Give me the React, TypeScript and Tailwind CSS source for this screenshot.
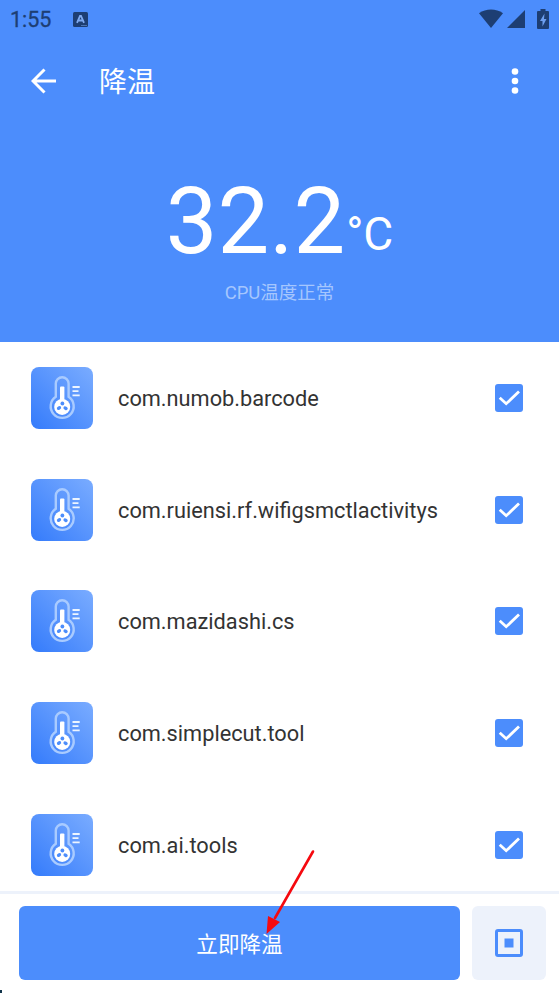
import React from 'react';

const packages = [
  'com.numob.barcode',
  'com.ruiensi.rf.wifigsmctlactivitys',
  'com.mazidashi.cs',
  'com.simplecut.tool',
  'com.ai.tools',
];

const ThermometerIcon = () => (
  <svg className="w-[62px] h-[62px]" viewBox="0 0 62 62" fill="none">
    <defs>
      <linearGradient id="tile" x1="0" y1="1" x2="1" y2="0">
        <stop offset="0" stopColor="#347bfb" />
        <stop offset="1" stopColor="#7aacff" />
      </linearGradient>
    </defs>
    <rect width="62" height="62" rx="8" fill="url(#tile)" />
    <path d="M24.8 29.8V16.6a6.4 6.4 0 0 1 12.8 0v13.2a11.5 11.5 0 1 1-12.8 0z" stroke="#a9cbff" strokeWidth="2.4" />
    <path d="M29 20.5a1 1 0 0 1 1-1h2.400a1 1 0 0 1 1 1V36H29z" fill="#fff" />
    <circle cx="31.2" cy="39.9" r="8" fill="#fff" />
    <g fill="#4c8dfb">
      <ellipse cx="31.4" cy="36.6" rx="1.9" ry="2" />
      <ellipse cx="28" cy="41" rx="2.3" ry="1.700" transform="rotate(-30 28 41)" />
      <ellipse cx="34.6" cy="41.2" rx="2.3" ry="1.700" transform="rotate(30 34.6 41.2)" />
    </g>
    <path d="M41.5 20h7.2M41.5 24.2h6M41.5 28.4h7.2" stroke="#edf5ff" strokeWidth="1.8" />
  </svg>
);

const Checkbox = () => (
  <svg className="w-7 h-7" viewBox="0 0 28 28" fill="none">
    <rect width="28" height="28" rx="3" fill="#4c8dfc" />
    <path d="M4.7 13.7l6.5 6L24 7.5" stroke="#fff" strokeWidth="2.8" />
  </svg>
);

const StatusBar = () => (
  <div className="flex h-[38px] items-center pl-[10px] pr-[10px] text-[#1d3e73]">
    <span className="mt-[2px] w-[63px] text-[21.5px] leading-none">
      <span className="[-webkit-text-stroke:0.3px_#1d3e73]">1:55</span>
    </span>
    <svg className="h-[15px] w-[15px]" viewBox="0 0 15 15">
      <rect width="15" height="15" rx="1.5" fill="currentColor" />
      <path d="M4 10.800L7 3.8h1l3 7M5.3 8.5h4.4" stroke="#7faaf0" strokeWidth="1.8" fill="none" />
      <path d="M8.5 13.5h5" stroke="#7faaf0" strokeWidth="1" strokeDasharray="1 1" />
    </svg>
    <svg className="ml-auto h-[20px] w-[24px]" viewBox="0 0 24 20" fill="currentColor">
      <path d="M0 4.2C7-.7 17-.7 24 4.2L12 19z" />
    </svg>
    <svg className="ml-[4px] h-[18px] w-[18px]" viewBox="0 0 18 18" fill="currentColor">
      <path d="M18 0v18H0z" />
    </svg>
    <svg className="ml-[12px] h-[20px] w-[12px]" viewBox="0 0 12 20" fill="currentColor">
      <path d="M3.5 0h5v2H11a1 1 0 0 1 1 1v16a1 1 0 0 1-1 1H1a1 1 0 0 1-1-1V3a1 1 0 0 1 1-1h2.5z" />
      <path d="M7.5 4.5L3 12h2.5v5.5L9.5 10H7z" fill="#6d9ff0" />
    </svg>
  </div>
);

export default function App() {
  return (
    <div className="relative flex h-[993px] w-[559px] flex-col overflow-hidden bg-white font-[Roboto,'Noto_Sans_CJK_SC',sans-serif]">
      <header className="h-[342px] shrink-0 bg-[#4c8dfc] text-white">
        <StatusBar />
        <div className="flex h-[86px] items-center pl-[31px] pr-[40px]">
          <svg className="h-[26px] w-[26px]" viewBox="0 0 26 26" fill="none" stroke="#fff" strokeWidth="3">
            <path d="M25 13H2M13.5 1.5L2 13l11.5 11.5" />
          </svg>
          <h1 className="ml-[42px] mt-[4px] text-[28px] leading-none">降温</h1>
          <svg className="ml-auto h-[26px] w-[8px]" viewBox="0 0 8 26" fill="#fff">
            <circle cx="4" cy="3.5" r="3.3" />
            <circle cx="4" cy="13" r="3.3" />
            <circle cx="4" cy="22.5" r="3.3" />
          </svg>
        </div>
        <div className="mt-[51px] flex h-[94px] items-baseline justify-center leading-none">
          <span className="text-[92px] leading-[94px]">32.2</span>
          <span className="ml-px pb-[3px] text-[46px] leading-[47px]">
            <span className="inline-block -translate-y-[3px]">°C</span>
          </span>
        </div>
        <p className="mt-[14px] text-center text-[18.5px] leading-[20px] text-[#a5c6fe]">CPU温度正常</p>
      </header>

      <ul className="h-[549px] shrink-0 overflow-hidden">
        {packages.map((name) => (
          <li key={name} className="flex h-[111.7px] items-center pl-[31px] pr-[36px]">
            <ThermometerIcon />
            <span className="ml-[25px] mt-[3px] flex-1 text-[21.75px] text-[#333]">{name}</span>
            <Checkbox />
          </li>
        ))}
      </ul>

      <footer className="flex flex-1 gap-3 border-t-[3px] border-[#edf2fb] pl-[19px] pr-3 pt-3">
        <button className="h-[74px] w-[441px] rounded-md bg-[#4c8dfc] pt-[4px] text-[21.6px] text-white">立即降温</button>
        <button className="flex h-[74px] w-[74px] items-center justify-center rounded-md bg-[#edf2fb]">
          <svg className="h-7 w-7" viewBox="0 0 28 28" fill="none">
            <rect x="1.5" y="1.5" width="25" height="25" rx="1.5" stroke="#4c8dfc" strokeWidth="3" />
            <rect x="9.5" y="9.5" width="9" height="9" fill="#4c8dfc" />
          </svg>
        </button>
      </footer>

      {/* pointer to the cool-down button */}
      <svg className="absolute left-[260px] top-[845px] h-[95px] w-[60px]" viewBox="0 0 60 95">
        <path d="M53 6.5L15 73" stroke="#f5090f" strokeWidth="2.6" strokeLinecap="round" />
        <path d="M6.5 89L8 71l12 6z" fill="#f5090f" />
      </svg>
      <span className="absolute bottom-0 left-0 h-[3px] w-[2px] bg-[#12344a]" />
    </div>
  );
}
